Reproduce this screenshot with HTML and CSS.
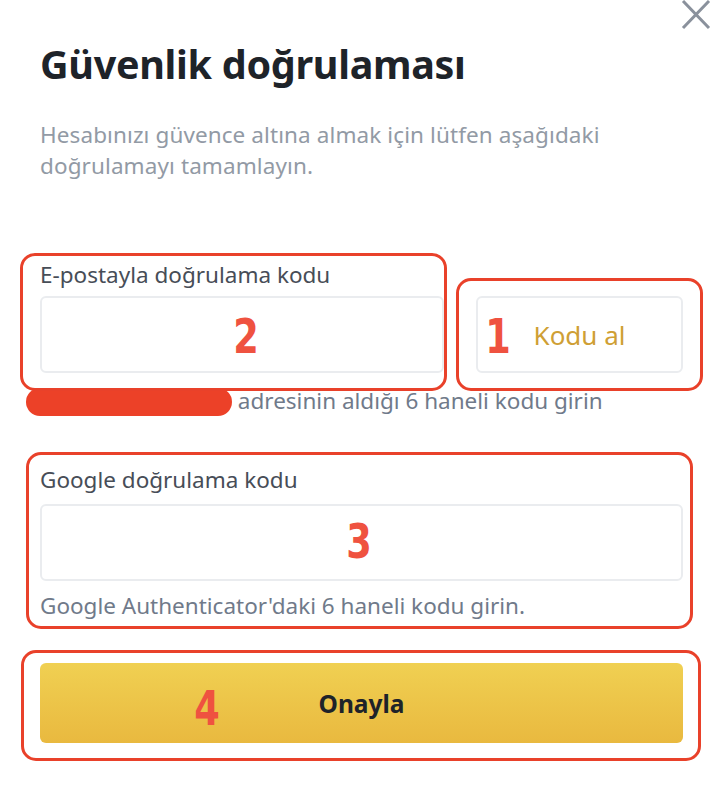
FILE: index.html
```html
<!DOCTYPE html>
<html lang="tr">
<head>
    <meta charset="UTF-8">
    <meta name="viewport" content="width=device-width, initial-scale=1.0">
    <title>Güvenlik doğrulaması</title>
    <link rel="stylesheet" href="styles.css">
</head>
<body>
    <section class="dialog">
        <button class="close" aria-label="Kapat">
            <svg width="30" height="30" viewBox="0 0 30 30">
                <path d="M2 1 L28 28 M28 1 L2 28" stroke="#8a919c" stroke-width="3" fill="none"/>
            </svg>
        </button>

        <h1 class="title">Güvenlik doğrulaması</h1>
        <p class="subtitle">Hesabınızı güvence altına almak için lütfen aşağıdaki doğrulamayı tamamlayın.</p>

        <div class="email-row">
            <div class="field email-field">
                <label class="field-label">E-postayla doğrulama kodu</label>
                <div class="input"></div>
            </div>
            <button class="get-code">Kodu al</button>
        </div>
        <p class="hint"><span class="redact"></span> adresinin aldığı 6 haneli kodu girin</p>

        <div class="field google-field">
            <label class="field-label">Google doğrulama kodu</label>
            <div class="input"></div>
            <p class="hint">Google Authenticator'daki 6 haneli kodu girin.</p>
        </div>

        <button class="confirm">Onayla</button>

        <!-- annotation marks -->
        <div class="mark box-2"></div>
        <div class="mark box-1"></div>
        <div class="mark box-3"></div>
        <div class="mark box-4"></div>
        <span class="num num-1">1</span>
        <span class="num num-2">2</span>
        <span class="num num-3">3</span>
        <span class="num num-4">4</span>
    </section>
</body>
</html>
```

FILE: styles.css
```css
/* General body styling */
body {
    font-family: "Noto Sans", "Open Sans", sans-serif;
    margin: 0;
    padding: 0;
    background-color: #ffffff;
}

/* Dialog container */
.dialog {
    position: relative;
    padding: 39px 41px 0 40px;
    height: 759px;
}

.close {
    position: absolute;
    top: 0;
    right: 13px;
    border: none;
    background: none;
    padding: 0;
    cursor: pointer;
}

.close svg {
    display: block;
}

.title {
    margin: 0;
    font-size: 39.5px;
    line-height: 50px;
    font-weight: 700;
    color: #1e2329;
    letter-spacing: -0.3px;
}

.subtitle {
    margin: 30px 0 0;
    max-width: 620px;
    font-size: 22.5px;
    line-height: 31px;
    color: #929aa5;
    letter-spacing: 0.1px;
}

/* Fields */
.email-row {
    display: flex;
    align-items: flex-end;
    gap: 32px;
    margin-top: 79px;
}

.email-field {
    width: 404px;
}

.field-label {
    display: block;
    font-size: 22.5px;
    line-height: 30px;
    color: #474d57;
    margin-bottom: 6px;
}

.input {
    height: 77px;
    border: 2px solid #eaecef;
    border-radius: 6px;
    box-sizing: border-box;
}

.get-code {
    flex: 1;
    height: 77px;
    border: 2px solid #eaecef;
    border-radius: 6px;
    background: #ffffff;
    color: #cf9f35;
    font-family: inherit;
    font-size: 26px;
    padding: 0;
    cursor: pointer;
}

.hint {
    margin: 13px 0 0;
    font-size: 22.5px;
    line-height: 30px;
    color: #707a8a;
}

.redact {
    display: inline-block;
    width: 206px;
    height: 28px;
    margin-left: -14px;
    border-radius: 14px;
    background-color: #ec4128;
    vertical-align: -7px;
}

.google-field {
    margin-top: 49px;
}

.google-field .field-label {
    margin-bottom: 9px;
}

.google-field .hint {
    margin-top: 10px;
}

.confirm {
    display: block;
    width: 100%;
    height: 80px;
    margin-top: 42px;
    border: none;
    border-radius: 6px;
    background: linear-gradient(#f0d052, #e9b93f);
    color: #1e2329;
    font-family: inherit;
    font-size: 24.5px;
    font-weight: 700;
    cursor: pointer;
}

/* Annotation marks drawn over the form */
.mark {
    position: absolute;
    border: 3px solid #e9412a;
    border-radius: 15px;
    box-sizing: border-box;
}

.box-2 { left: 20px; top: 253px; width: 427px; height: 138px; }
.box-1 { left: 456px; top: 278px; width: 247px; height: 113px; }
.box-3 { left: 26px; top: 452px; width: 667px; height: 177px; }
.box-4 { left: 21px; top: 650px; width: 680px; height: 111px; }

.num {
    position: absolute;
    font-family: "DejaVu Sans", sans-serif;
    font-stretch: condensed;
    font-weight: 700;
    font-size: 48px;
    line-height: 50px;
    color: #ef5240;
    transform: scaleX(0.85);
}

.num-1 { left: 483px; top: 311px; }
.num-2 { left: 231px; top: 311px; }
.num-3 { left: 344px; top: 516px; }
.num-4 { left: 192px; top: 683px; }
```
